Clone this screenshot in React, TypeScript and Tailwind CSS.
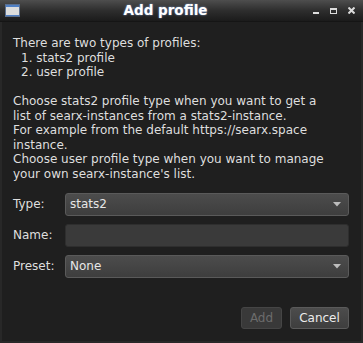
function WindowIcon() {
  return (
    <svg width="15" height="13" viewBox="0 0 15 13" className="shrink-0">
      <rect x="0" y="0" width="15" height="13" fill="#dcdcdc" />
      <rect x="0" y="0" width="15" height="3" fill="#4f7fc4" />
      <rect x="0" y="11" width="15" height="2" fill="#4f7fc4" />
      <rect x="0.5" y="0.5" width="14" height="12" fill="none" stroke="#5b6f8e" strokeWidth="1" />
    </svg>
  )
}

function Arrow() {
  return (
    <svg width="8" height="5" viewBox="0 0 8 5" className="shrink-0">
      <path d="M0 0 L8 0 L4 4.5 Z" fill="#bdbdbd" />
    </svg>
  )
}

function Combo({ value }: { value: string }) {
  return (
    <div className="flex h-[23px] items-center justify-between rounded-[3px] border border-[#5a5a5a] bg-gradient-to-b from-[#4c4c4c] to-[#3e3e3e] pl-[4px] pr-[7px] text-[#e6e6e6]">
      <span>{value}</span>
      <Arrow />
    </div>
  )
}

export default function App() {
  return (
    <div
      className="flex h-[343px] w-[363px] flex-col bg-[#1f1f1f] text-[12px] leading-[14.5px] text-[#dedede]"
      style={{ fontFamily: '"DejaVu Sans", sans-serif' }}
    >
      {/* Title bar */}
      <div className="relative flex h-[22px] shrink-0 items-center border-b border-[#151515] bg-gradient-to-b from-[#4e4e4e] via-[#2e2e2e] to-[#1b1b1b] px-[5px]">
        <WindowIcon />
        <div className="absolute inset-0 flex items-center justify-center pr-[32px]">
          <span className="text-[13.5px] font-bold text-white [text-shadow:0_0_2px_#7f9fd8]">Add profile</span>
        </div>
        <div className="ml-auto flex items-center gap-[11px] pr-[3px]">
          <div className="mt-[5px] h-[2px] w-[6px] bg-[#dcdcdc]" />
          <div className="h-[6px] w-[7px] border border-t-2 border-[#dcdcdc]" />
          <svg width="7" height="7" viewBox="0 0 7 7">
            <path d="M0.5 0.5 L6.5 6.5 M6.5 0.5 L0.5 6.5" stroke="#dcdcdc" strokeWidth="2" />
          </svg>
        </div>
      </div>

      {/* Body */}
      <div className="flex flex-1 flex-col border-x-2 border-b-2 border-[#282828] px-[11px] pt-[14px] pb-[12px]">
        <div>
          <p>There are two types of profiles:</p>
          <p className="pl-[8px]">1. stats2 profile</p>
          <p className="pl-[8px]">2. user profile</p>
          <p>&nbsp;</p>
          <p>
            Choose stats2 profile type when you want to get a<br />
            list of searx-instances from a stats2-instance.<br />
            For example from the default https://searx.space<br />
            instance.<br />
            Choose user profile type when you want to manage<br />
            your own searx-instance's list.
          </p>
        </div>

        <div className="mt-[12px] grid grid-cols-[52px_1fr] items-center gap-y-[8px] pr-[1px]">
          <span>Type:</span>
          <Combo value="stats2" />
          <span>Name:</span>
          <div className="h-[23px] rounded-[3px] border border-[#2e2e2e] bg-[#3a3a3a]" />
          <span>Preset:</span>
          <Combo value="None" />
        </div>

        <div className="mt-auto flex justify-end gap-[8px] pr-[1px]">
          <button className="h-[22px] w-[41px] rounded-[3px] border border-[#454545] bg-[#393939] text-[#6c6c6c]">
            Add
          </button>
          <button className="h-[22px] w-[59px] rounded-[3px] border border-[#5a5a5a] bg-gradient-to-b from-[#4c4c4c] to-[#3e3e3e] text-[#ececec]">
            Cancel
          </button>
        </div>
      </div>
    </div>
  )
}
